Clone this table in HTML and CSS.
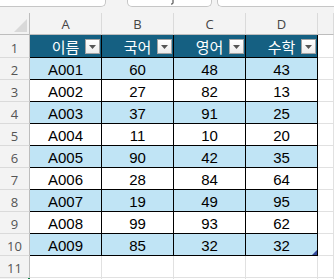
FILE: index.html
```html
<!DOCTYPE html>
<html lang="ko">
<head>
<meta charset="utf-8">
<title>Sheet</title>
<link rel="stylesheet" href="styles.css">
</head>
<body>
<div class="toolbar">
  <div class="box box-name"></div>
  <div class="box box-mid"><svg class="mid-glyph" width="6" height="5" viewBox="0 0 6 5"><path d="M4 0 V3 Q4 4 3 4 H2" fill="none" stroke="#333" stroke-width="1"/></svg></div>
  <div class="box box-formula"></div>
</div>
<div class="sheet">
  <div class="corner"><span class="corner-tri"></span></div>
  <div class="colhead">A</div>
  <div class="colhead">B</div>
  <div class="colhead">C</div>
  <div class="colhead">D</div>
  <div class="colhead"></div>

  <div class="rowhead">1</div>
  <div class="cell th">이름<span class="filter"></span></div>
  <div class="cell th">국어<span class="filter"></span></div>
  <div class="cell th">영어<span class="filter"></span></div>
  <div class="cell th">수학<span class="filter"></span></div>
  <div class="cell blank"></div>

  <div class="rowhead">2</div>
  <div class="cell band">A001</div><div class="cell band">60</div><div class="cell band">48</div><div class="cell band">43</div>
  <div class="cell blank"></div>

  <div class="rowhead">3</div>
  <div class="cell">A002</div><div class="cell">27</div><div class="cell">82</div><div class="cell">13</div>
  <div class="cell blank"></div>

  <div class="rowhead">4</div>
  <div class="cell band">A003</div><div class="cell band">37</div><div class="cell band">91</div><div class="cell band">25</div>
  <div class="cell blank"></div>

  <div class="rowhead">5</div>
  <div class="cell">A004</div><div class="cell">11</div><div class="cell">10</div><div class="cell">20</div>
  <div class="cell blank"></div>

  <div class="rowhead">6</div>
  <div class="cell band">A005</div><div class="cell band">90</div><div class="cell band">42</div><div class="cell band">35</div>
  <div class="cell blank"></div>

  <div class="rowhead">7</div>
  <div class="cell">A006</div><div class="cell">28</div><div class="cell">84</div><div class="cell">64</div>
  <div class="cell blank"></div>

  <div class="rowhead">8</div>
  <div class="cell band">A007</div><div class="cell band">19</div><div class="cell band">49</div><div class="cell band">95</div>
  <div class="cell blank"></div>

  <div class="rowhead">9</div>
  <div class="cell">A008</div><div class="cell">99</div><div class="cell">93</div><div class="cell">62</div>
  <div class="cell blank"></div>

  <div class="rowhead">10</div>
  <div class="cell band">A009</div><div class="cell band">85</div><div class="cell band">32</div><div class="cell band last">32<span class="resize"></span></div>
  <div class="cell blank"></div>

  <div class="rowhead">11</div>
  <div class="cell blank"></div><div class="cell blank"></div><div class="cell blank"></div><div class="cell blank"></div><div class="cell blank"></div>

  <div class="rowhead rowhead-active"></div>
  <div class="cell blank"></div><div class="cell blank"></div><div class="cell blank"></div><div class="cell blank"></div><div class="cell blank"></div>
</div>
</body>
</html>
```

FILE: styles.css
```css
* {
  box-sizing: border-box;
  margin: 0;
  padding: 0;
}

html,
body {
  width: 334px;
  height: 279px;
  overflow: hidden;
}

body {
  background: #f3f3f3;
  font-family: "Liberation Sans", "Noto Sans CJK KR", sans-serif;
  color: #000;
}

.toolbar {
  height: 13px;
  display: flex;
  align-items: flex-start;
}

.box {
  height: 7px;
  background: #fff;
  border: 1px solid #c6c6c6;
  border-top: 0;
  border-radius: 0 0 5px 5px;
}

.box-name {
  width: 106px;
  border-left: 0;
  border-radius: 0 0 5px 0;
}

.box-mid {
  width: 85px;
  margin-left: 21px;
  display: flex;
  justify-content: center;
}

.mid-glyph {
  display: block;
  margin-left: 4px;
}

.box-formula {
  flex: 1;
  margin-left: 5px;
  border-right: 0;
  border-radius: 0 0 0 5px;
}

.sheet {
  display: grid;
  grid-template-columns: 30px 72px 72px 72px 72px 1fr;
  grid-template-rows: 22px 23px repeat(11, 22px);
  background: #fff;
}

.corner {
  background: #f3f3f3;
  border-right: 1px solid #bdbdbd;
  border-bottom: 1px solid #bdbdbd;
  display: flex;
  justify-content: flex-end;
  align-items: flex-end;
  padding: 0 2px 2px 0;
}

.corner-tri {
  width: 13px;
  height: 13px;
  background: #d9d9d9;
  clip-path: polygon(100% 0, 100% 100%, 0 100%);
}

.colhead {
  background: #f3f3f3;
  border-right: 1px solid #dadada;
  border-bottom: 1px solid #bdbdbd;
  color: #444;
  font-family: "Open Sans", "Liberation Sans", sans-serif;
  font-size: 13px;
  display: flex;
  align-items: center;
  justify-content: center;
  padding-top: 1px;
}

.rowhead {
  background: #f3f3f3;
  border-right: 1px solid #bdbdbd;
  border-bottom: 1px solid #dadada;
  color: #555;
  font-family: "Open Sans", "Liberation Sans", sans-serif;
  font-size: 13px;
  display: flex;
  align-items: center;
  justify-content: center;
  padding-top: 3px;
}

.rowhead-active {
  border-right: 2px solid #107c41;
}

.cell {
  position: relative;
  background: #fff;
  border-right: 1px solid #000;
  border-bottom: 1px solid #000;
  font-size: 15px;
  display: flex;
  align-items: center;
  justify-content: center;
  padding-top: 1px;
}

.cell.band {
  background: #c0e4f5;
}

.cell.th {
  background: #156082;
  color: #fff;
  font-family: "Noto Sans CJK KR", sans-serif;
  font-size: 15px;
  padding-top: 0;
}

.cell.blank {
  border-right: 1px solid #e1e1e1;
  border-bottom: 1px solid #e1e1e1;
}

.filter {
  position: absolute;
  right: 1px;
  top: 4px;
  width: 15px;
  height: 15px;
  background: linear-gradient(#ffffff, #ececec);
  border: 1px solid #a3a3a3;
  display: flex;
  align-items: center;
  justify-content: center;
}

.filter::after {
  content: "";
  width: 7px;
  height: 4px;
  background: #555;
  clip-path: polygon(0 0, 100% 0, 50% 100%);
  margin-top: 1px;
}

.resize {
  position: absolute;
  right: 0;
  bottom: 0;
  width: 5px;
  height: 5px;
  background: #34499a;
  clip-path: polygon(100% 0, 100% 100%, 0 100%);
}
```
